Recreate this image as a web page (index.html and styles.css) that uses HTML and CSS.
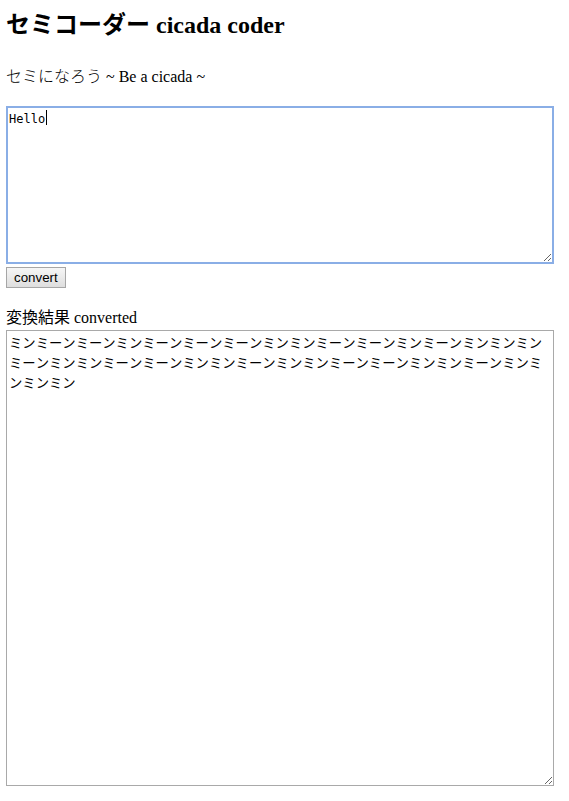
FILE: index.html
```html
<!DOCTYPE html>
<html lang="ja">
<head>
<meta charset="utf-8">
<title>セミコーダー cicada coder</title>
<link rel="stylesheet" href="styles.css">
</head>
<body>
<h1>セミコーダー cicada coder</h1>
<p class="tagline">セミになろう ~ Be a cicada ~</p>
<form class="coder">
<textarea class="field source" aria-label="Text to convert" spellcheck="false">Hello</textarea>
<button class="convert" type="button">convert</button>
<label class="result-label" for="result">変換結果 converted</label>
<textarea class="field result" id="result" spellcheck="false">ミンミーンミーンミンミーンミーンミーンミンミンミーンミーンミンミーンミンミンミンミーンミンミンミーンミーンミンミンミーンミンミンミーンミーンミンミンミーンミンミンミンミン</textarea>
</form>
</body>
</html>
```

FILE: styles.css
```css
* {
  box-sizing: border-box;
}

body {
  margin: 5px 15px 15px 6px;
  background: #fff;
  color: #000;
  font: 16px/24px "Liberation Serif", "Noto Sans CJK JP", serif;
}

h1 {
  margin: 0;
  font-size: 24px;
  line-height: 40px;
}

.tagline {
  margin: 20px 0 17px;
  font-weight: 300;
}

.coder {
  display: flex;
  flex-direction: column;
  align-items: flex-start;
}

.field {
  width: 100%;
  margin: 0;
  padding: 2px;
  border: 1px solid #a9a9a9;
  font-family: "DejaVu Sans Mono", "Noto Sans CJK JP", monospace;
  line-height: 20px;
  resize: both;
}

.source {
  height: 158px;
  padding: 1px;
  border: 2px solid #8aaee6;
  outline: none;
  /* text cursor after the sample word */
  background: linear-gradient(#000, #000) 38px 2px / 1px 15px no-repeat #fff;
  font-size: 12px;
}

.convert {
  margin: 3px 0 18px;
  padding: 2px 7px;
  border: 1px solid #a6a6a6;
  background: linear-gradient(#f6f6f6, #dedede);
  color: #000;
  font-family: "Liberation Sans", sans-serif;
  line-height: 15px;
}

.result {
  height: 456px;
  padding: 2px 8px 2px 2px;
  font-family: "Noto Sans CJK JP", monospace;
  font-kerning: none;
}
```
